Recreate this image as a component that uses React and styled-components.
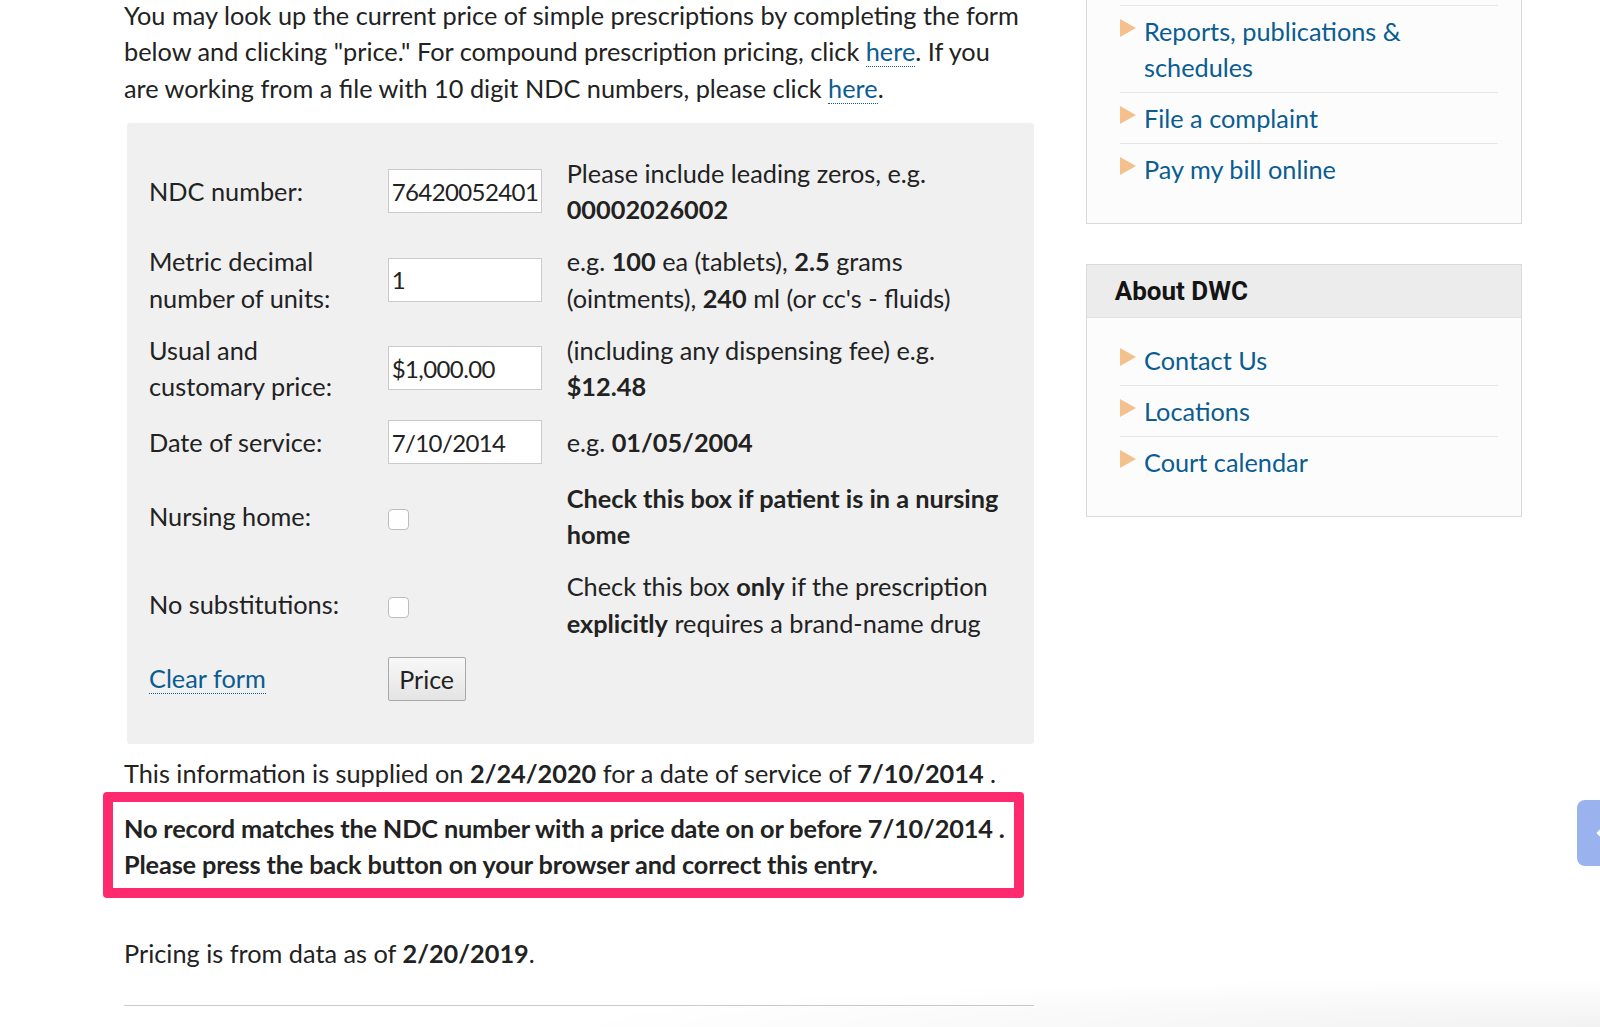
import React from "react";
import styled, { createGlobalStyle } from "styled-components";

const GlobalStyle = createGlobalStyle`
  html, body {
    margin: 0;
    padding: 0;
    background: #ffffff;
  }
  body {
    font-family: Lato, "Open Sans", sans-serif;
    font-size: 25.3px;
    line-height: 36.5px;
    color: #222222;
    overflow: hidden;
  }
  * { box-sizing: border-box; }
`;

const Page = styled.div`
  display: flex;
  align-items: flex-start;
  gap: 51.7px;
  padding-left: 124px;
  width: 1600px;
  height: 1027px;
  overflow: hidden;
`;

const Main = styled.main`
  flex: none;
  width: 910px;
`;

const Para = styled.p`
  margin: ${(p) => p.$margin || "0"};
  max-width: ${(p) => p.$maxWidth || "none"};
`;

const Link = styled.a`
  color: #0a5d92;
  text-decoration: none;
  border-bottom: 1px dotted #0a5d92;
  cursor: pointer;
`;

const Panel = styled.form`
  margin-left: 2.5px;
  background: #f0f0f0;
  border-radius: 3px;
  padding: 32px 26px 43px 22.5px;
  display: grid;
  grid-template-columns: 238.7px 179px 1fr;
  row-gap: 15.5px;
  align-items: center;
`;

const FieldLabel = styled.label`
  display: block;
  padding-right: 28.7px;
`;

const Cell = styled.div`
  display: flex;
  align-items: center;
`;

const Hint = styled.div`
  line-height: 36.5px;
`;

const TextInput = styled.input`
  width: 154px;
  height: 44px;
  border: 1px solid #cacaca;
  background: #ffffff;
  padding: 0 2px 0 3px;
  font-family: inherit;
  font-size: 24px;
  letter-spacing: -0.6px;
  color: #222222;
  outline: none;
`;

const CheckBox = styled.input.attrs({ type: "checkbox" })`
  appearance: none;
  -webkit-appearance: none;
  margin: 6px 0 0 0;
  width: 21px;
  height: 21px;
  border: 1px solid #bdbdbd;
  border-radius: 4px;
  background: #ffffff;
`;

const PriceButton = styled.button`
  width: 78px;
  height: 44px;
  border: 1px solid #a9a9a9;
  border-radius: 2px;
  background: linear-gradient(#f8f8f8, #e4e4e4);
  font-family: inherit;
  font-size: 25px;
  color: #222222;
  padding: 0;
`;

const Message = styled.div`
  margin: 0.7px 0 37.7px -21.3px;
  width: 921.3px;
  border: 10px solid #ff2a6d;
  border-radius: 4px;
  padding: 8px 0 5px 11.3px;
  font-weight: 700;
  letter-spacing: -0.15px;
`;

const Rule = styled.hr`
  margin: 33px 0 0;
  border: none;
  border-top: 1px solid #cccccc;
`;

const Sidebar = styled.aside`
  flex: none;
  width: 436px;
  display: flex;
  flex-direction: column;
  gap: 40px;
`;

const Box = styled.section`
  border: 1px solid #dadada;
  background: #fcfcfc;
  margin-top: ${(p) => (p.$continued ? "-20px" : "0")};
`;

const BoxHeader = styled.h2`
  margin: 0;
  height: 53px;
  display: flex;
  align-items: center;
  padding-left: 28px;
  background: #ececec;
  border-bottom: 1px solid #e2e2e2;
  font-family: Roboto, "Liberation Sans", sans-serif;
  font-size: 26px;
  font-weight: 700;
  color: #141414;
`;

const NavList = styled.ul`
  list-style: none;
  margin: 0;
  padding: ${(p) => (p.$continued ? "24px" : "17px")} 23px 29px 33.3px;
`;

const NavItem = styled.li`
  display: flex;
  align-items: flex-start;
  gap: 8px;
  padding: 7px 0;
  line-height: 36px;
  border-top: 1px solid #e6e6e6;

  &:first-child {
    border-top-color: ${(p) => (p.$continued ? "#e6e6e6" : "transparent")};
    border-top-width: ${(p) => (p.$continued ? "1px" : "0")};
  }

  &::before {
    content: "";
    flex: none;
    margin-top: 6px;
    width: 0;
    height: 0;
    border-top: 9px solid transparent;
    border-bottom: 9px solid transparent;
    border-left: 16px solid #f4c08e;
  }
`;

const NavLink = styled.a`
  color: #0a5d92;
  text-decoration: none;
  cursor: pointer;
`;

const ScrollTab = styled.button`
  position: fixed;
  left: 1577px;
  top: 800px;
  width: 44px;
  height: 66px;
  border: none;
  border-radius: 8px;
  background: #9ab3ef;
  display: flex;
  align-items: center;
  justify-content: flex-start;
  padding: 0 0 0 19px;
`;

const BottomShade = styled.div`
  position: fixed;
  right: 0;
  bottom: 0;
  width: 1050px;
  height: 50px;
  pointer-events: none;
  background: radial-gradient(ellipse at 100% 100%, rgba(0, 0, 0, 0.05), rgba(0, 0, 0, 0) 70%);
`;

const formRows = [
  {
    label: "NDC number:",
    field: <TextInput defaultValue="76420052401" />,
    hint: (
      <>
        Please include leading zeros, e.g. <b>00002026002</b>
      </>
    ),
  },
  {
    label: "Metric decimal number of units:",
    field: <TextInput defaultValue="1" />,
    hint: (
      <>
        e.g. <b>100</b> ea (tablets), <b>2.5</b> grams (ointments), <b>240</b> ml (or cc's - fluids)
      </>
    ),
  },
  {
    label: "Usual and customary price:",
    field: <TextInput defaultValue="$1,000.00" />,
    hint: (
      <>
        (including any dispensing fee) e.g. <b>$12.48</b>
      </>
    ),
  },
  {
    label: "Date of service:",
    field: <TextInput defaultValue="7/10/2014" />,
    hint: (
      <>
        e.g. <b>01/05/2004</b>
      </>
    ),
  },
  {
    label: "Nursing home:",
    field: <CheckBox />,
    hint: <b>Check this box if patient is in a nursing home</b>,
  },
  {
    label: "No substitutions:",
    field: <CheckBox />,
    hint: (
      <>
        Check this box <b>only</b> if the prescription <b>explicitly</b> requires a brand-name drug
      </>
    ),
  },
];

const resourceLinks = ["Reports, publications & schedules", "File a complaint", "Pay my bill online"];
const aboutLinks = ["Contact Us", "Locations", "Court calendar"];

function SideNav({ items, continued }) {
  return (
    <NavList $continued={continued}>
      {items.map((text) => (
        <NavItem key={text} $continued={continued}>
          <NavLink>{text}</NavLink>
        </NavItem>
      ))}
    </NavList>
  );
}

export default function App() {
  return (
    <>
      <GlobalStyle />
      <Page>
        <Main>
          <Para $margin="-3.5px 0 16.5px" $maxWidth="902px">
            You may look up the current price of simple prescriptions by completing the form below and clicking
            "price." For compound prescription pricing, click <Link>here</Link>. If you are working from a file
            with 10 digit NDC numbers, please click <Link>here</Link>.
          </Para>

          <Panel onSubmit={(e) => e.preventDefault()}>
            {formRows.map((row) => (
              <React.Fragment key={row.label}>
                <FieldLabel>{row.label}</FieldLabel>
                <Cell>{row.field}</Cell>
                <Hint>{row.hint}</Hint>
              </React.Fragment>
            ))}
            <FieldLabel>
              <Link>Clear form</Link>
            </FieldLabel>
            <Cell>
              <PriceButton type="submit">Price</PriceButton>
            </Cell>
            <Hint />
          </Panel>

          <Para $margin="11px 0 0">
            This information is supplied on <b>2/24/2020</b> for a date of service of <b>7/10/2014</b> .
          </Para>

          <Message>
            No record matches the NDC number with a price date on or before 7/10/2014 .
            <br />
            Please press the back button on your browser and correct this entry.
          </Message>

          <Para>
            Pricing is from data as of <b>2/20/2019</b>.
          </Para>

          <Rule />
        </Main>

        <Sidebar>
          <Box $continued>
            <SideNav items={resourceLinks} continued />
          </Box>
          <Box>
            <BoxHeader>About DWC</BoxHeader>
            <SideNav items={aboutLinks} />
          </Box>
        </Sidebar>
      </Page>

      <BottomShade />
      <ScrollTab aria-label="Back to top">
        <svg width="12" height="18" viewBox="0 0 12 18" fill="none">
          <path d="M10 2 L2 9 L10 16" stroke="#ffffff" strokeWidth="2.5" strokeLinecap="round" strokeLinejoin="round" />
        </svg>
      </ScrollTab>
    </>
  );
}
